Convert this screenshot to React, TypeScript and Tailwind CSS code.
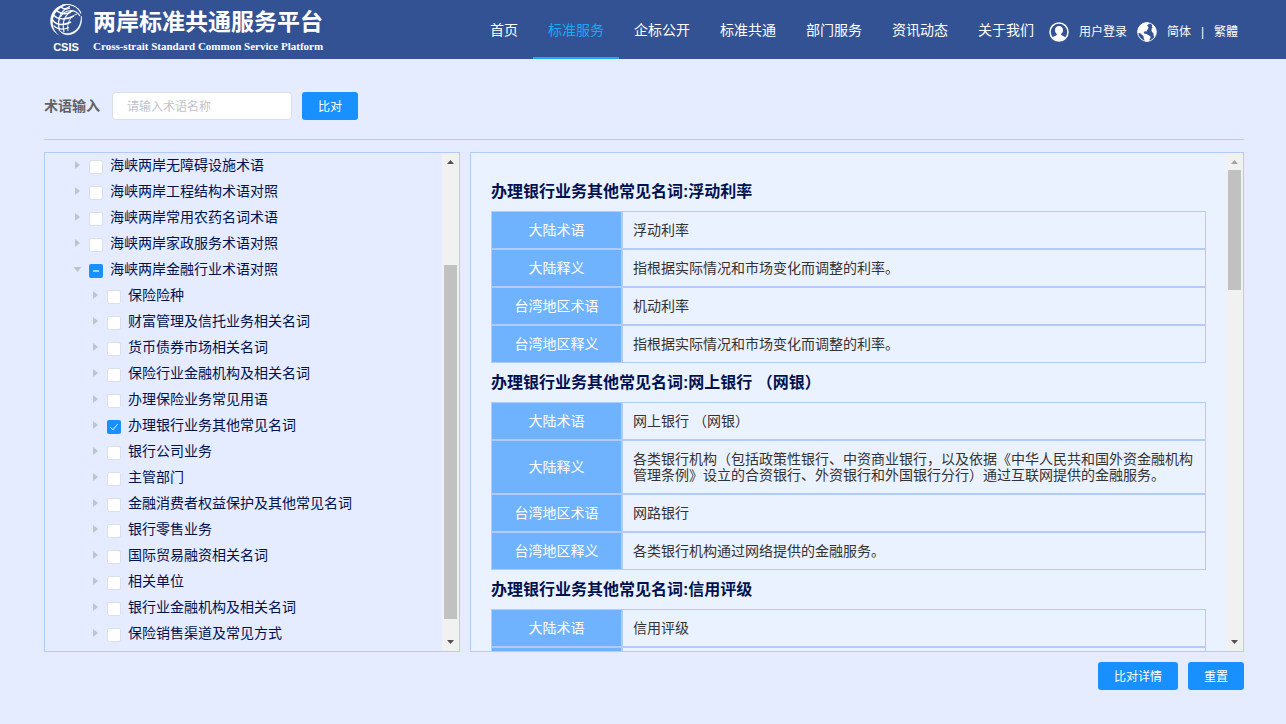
import { useState } from "react";

type TreeNode = {
  label: string;
  level: 1 | 2;
  state?: "checked" | "partial";
  open?: boolean;
};

const NAV = ["首页", "标准服务", "企标公开", "标准共通", "部门服务", "资讯动态", "关于我们"];

const TREE: TreeNode[] = [
  { label: "海峡两岸无障碍设施术语", level: 1 },
  { label: "海峡两岸工程结构术语对照", level: 1 },
  { label: "海峡两岸常用农药名词术语", level: 1 },
  { label: "海峡两岸家政服务术语对照", level: 1 },
  { label: "海峡两岸金融行业术语对照", level: 1, state: "partial", open: true },
  { label: "保险险种", level: 2 },
  { label: "财富管理及信托业务相关名词", level: 2 },
  { label: "货币债券市场相关名词", level: 2 },
  { label: "保险行业金融机构及相关名词", level: 2 },
  { label: "办理保险业务常见用语", level: 2 },
  { label: "办理银行业务其他常见名词", level: 2, state: "checked" },
  { label: "银行公司业务", level: 2 },
  { label: "主管部门", level: 2 },
  { label: "金融消费者权益保护及其他常见名词", level: 2 },
  { label: "银行零售业务", level: 2 },
  { label: "国际贸易融资相关名词", level: 2 },
  { label: "相关单位", level: 2 },
  { label: "银行业金融机构及相关名词", level: 2 },
  { label: "保险销售渠道及常见方式", level: 2 },
];

const TERMS: { title: string; rows: [string, string][] }[] = [
  {
    title: "办理银行业务其他常见名词:浮动利率",
    rows: [
      ["大陆术语", "浮动利率"],
      ["大陆释义", "指根据实际情况和市场变化而调整的利率。"],
      ["台湾地区术语", "机动利率"],
      ["台湾地区释义", "指根据实际情况和市场变化而调整的利率。"],
    ],
  },
  {
    title: "办理银行业务其他常见名词:网上银行 （网银）",
    rows: [
      ["大陆术语", "网上银行 （网银）"],
      [
        "大陆释义",
        "各类银行机构（包括政策性银行、中资商业银行，以及依据《中华人民共和国外资金融机构管理条例》设立的合资银行、外资银行和外国银行分行）通过互联网提供的金融服务。",
      ],
      ["台湾地区术语", "网路银行"],
      ["台湾地区释义", "各类银行机构通过网络提供的金融服务。"],
    ],
  },
  {
    title: "办理银行业务其他常见名词:信用评级",
    rows: [
      ["大陆术语", "信用评级"],
      ["", ""],
    ],
  },
];

function LogoMark() {
  return (
    <svg viewBox="0 0 34 34" className="h-[34px] w-[34px]" fill="none" stroke="#fff">
      <path d="M20 1.200C9 .5 1.500 8 1.300 17.500C1.200 24 4.500 29.500 10.500 32.500C5.500 28.500 3.300 24 3.800 18C4.400 10 10.500 3.500 20 1.200Z" fill="#fff" stroke="none" />
      <path d="M13 2C21 .2 29 3 32 10.500" strokeWidth="1.100" />
      <path d="M32.300 13C34 22 28.500 31.500 19 31.800C15 31.800 12 30 10.500 27.500C14 31 19 31.300 23.500 29.300C29.500 26.500 32.300 20.500 32.300 13Z" fill="#fff" strokeWidth="0.600" />
      <path d="M11.500 14C15 6.500 26 5 31 13" strokeWidth="1.100" />
      <path d="M21 3.500C12 7 7.500 16 10.500 27.500" strokeWidth="1.300" />
      <path d="M24 7.500C16 11 12.500 19 15 29" strokeWidth="1.100" />
      <path d="M28 11C21 13.500 17.500 20 19 28" strokeWidth="0.900" />
      <path d="M7.500 7.500C12 11.500 17 11.500 22 9" strokeWidth="1.500" />
      <path d="M4.500 12C9 17 17 17 25 13" strokeWidth="1.500" />
      <path d="M3.500 17C8 22.500 15 22.500 22 19" strokeWidth="1.400" />
      <path d="M4.500 22.500C9 27 14 27 20 24.500" strokeWidth="1.200" />
      <path d="M12 4C15 6.500 18 6.500 21 5" strokeWidth="1.300" />
    </svg>
  );
}

function UserIcon() {
  return (
    <svg viewBox="0 0 20 20" className="h-5 w-5">
      <circle cx="10" cy="10" r="9" fill="none" stroke="#fff" strokeWidth="1.500" />
      <path
        d="M10 4C7.500 4 6 5.800 6 8.200C6 9.800 6.800 11.200 7.900 12C7.900 13 7.500 13.400 6.400 13.800C5 14.300 4.200 14.800 3.800 15.800A8.500 8.500 0 0 0 16.200 15.800C15.800 14.800 15 14.300 13.600 13.800C12.500 13.400 12.100 13 12.100 12C13.200 11.200 14 9.800 14 8.200C14 5.800 12.500 4 10 4Z"
        fill="#fff"
      />
    </svg>
  );
}

function GlobeIcon() {
  return (
    <svg viewBox="0 0 20 20" className="h-5 w-5">
      <circle cx="10" cy="10" r="9.300" fill="none" stroke="#fff" strokeWidth="1" />
      <path
        d="M10.500 .6C6 .4 2.200 3 1 7.200C.5 9 .7 10.300 1.200 11.200C2.400 10.600 3.200 10.900 4.300 12.200C5.200 13.200 6.600 13.400 6.500 14.600C6.400 16 7.200 17.400 8 19.200C9 19.600 10.500 19.500 12 19.200C12.200 17.300 13.600 16.400 13.600 15C13.500 13.800 11.800 13.600 10.700 12.700C9.500 11.800 8.300 11.700 7.400 11.500C6.500 11.200 6.700 10 7.500 9.500C8.400 9 9 9.600 9.700 9.500C9.800 8 11.300 7 11.500 5.600C11.600 4.600 10.500 4.800 10.200 3.800C10.300 3 11.600 2.500 12.400 1Z"
        fill="#fff"
      />
      <path
        d="M15.500 2.600C14.500 3.600 14.800 4.700 15.600 5.500C14.500 6.300 14.600 7.200 14.500 8.200C14.500 9.600 15.500 10.600 16.500 11.300C16.200 12.900 16.600 14.100 17.300 15.300C20 12 20.300 6 15.500 2.600Z"
        fill="#fff"
      />
    </svg>
  );
}

function Header() {
  return (
    <header className="flex h-[59px] items-stretch bg-[#335293] pr-12 pl-12 text-white">
      <a href="#" className="flex items-start" aria-label="两岸标准共通服务平台">
        <span className="flex w-9 flex-col items-center pt-[3px]">
          <LogoMark />
          <span className="pt-1 text-[11px] leading-3 font-bold">CSIS</span>
        </span>
        <span className="flex flex-col pt-2 pl-[9px] font-['Liberation_Serif','Noto_Sans_CJK_SC',serif] font-bold whitespace-nowrap">
          <span className="text-[23px] leading-[30px]">两岸标准共通服务平台</span>
          <span className="text-[11px] leading-4">Cross-strait Standard Common Service Platform</span>
        </span>
      </a>
      <nav className="ml-auto flex text-sm whitespace-nowrap">
        {NAV.map((item) => (
          <a
            key={item}
            href="#"
            className={
              item === "标准服务"
                ? "flex items-center border-b-2 border-[#19a9f5] px-[15px] pt-[2px] text-[#19a9f5]"
                : "flex items-center border-b-2 border-transparent px-[15px] pt-[2px]"
            }
          >
            {item}
          </a>
        ))}
      </nav>
      <div className="flex items-center pt-1 text-xs whitespace-nowrap">
        <a href="#" className="flex items-center gap-[10px]">
          <UserIcon />
          <span>用户登录</span>
        </a>
        <a href="#" className="ml-[10px] flex items-center gap-[10px]">
          <GlobeIcon />
          <span>简体</span>
        </a>
        <span className="w-[23px] text-center">|</span>
        <a href="#">繁體</a>
      </div>
    </header>
  );
}

function ScrollBar({ start, size, atTop }: { start: number; size: number; atTop?: boolean }) {
  return (
    <div className="flex w-[17px] shrink-0 flex-col bg-[#f1f1f1]" aria-hidden="true">
      <svg viewBox="0 0 17 17" className="h-[17px] w-[17px]">
        <path d="M5 11L8.500 7L12 11Z" fill={atTop ? "#a3a3a3" : "#505050"} />
      </svg>
      <div className="flex grow flex-col items-center">
        <div style={{ height: `${start}%` }} />
        <div className="w-[13px] bg-[#c1c1c1]" style={{ height: `${size}%` }} />
      </div>
      <svg viewBox="0 0 17 17" className="h-[17px] w-[17px]">
        <path d="M5 6L8.500 10L12 6Z" fill="#505050" />
      </svg>
    </div>
  );
}

function TreeRow({ node, id }: { node: TreeNode; id: string }) {
  const [state, setState] = useState(node.state);
  return (
    <li className={node.level === 1 ? "flex h-[26px] items-center pl-5" : "flex h-[26px] items-center pl-[38px]"}>
      <button type="button" aria-label="展开" className="flex h-6 w-6 shrink-0 justify-center pt-1">
        <svg viewBox="0 0 12 12" className="h-3 w-3" fill="#c0c4cc">
          {node.open ? <path d="M2.500 5L10.500 5L6.500 10Z" /> : <path d="M4 3L9 7L4 11Z" />}
        </svg>
      </button>
      <span className="relative mt-[2px] h-[14px] w-[14px] shrink-0">
        <input
          id={id}
          type="checkbox"
          checked={state === "checked"}
          onChange={() => setState(state === "checked" ? undefined : "checked")}
          className={
            state
              ? "block h-[14px] w-[14px] appearance-none rounded-[2px] bg-[#1890ff]"
              : "block h-[14px] w-[14px] appearance-none rounded-[2px] border border-[#dcdfe6] bg-white"
          }
        />
        {state && (
          <svg viewBox="0 0 14 14" className="pointer-events-none absolute inset-0" fill="none" stroke="#fff">
            {state === "checked" ? <path d="M3.500 7.200L6 9.800L10.500 4.200" /> : <path d="M4 7H10" stroke="#a3d3ff" strokeWidth="2" />}
          </svg>
        )}
      </span>
      <label htmlFor={id} className="pb-[2px] pl-[7px] leading-5 whitespace-nowrap">
        {node.label}
      </label>
    </li>
  );
}

export default function App() {
  return (
    <div className="min-h-screen bg-[#e5ecff] font-['Liberation_Sans','Noto_Sans_CJK_SC',sans-serif] text-sm text-[#333]">
      <Header />
      <main className="pt-[33px] pr-[42px] pl-11">
        <form className="flex items-center border-b border-[#b3cbfa] pb-[19px]" onSubmit={(e) => e.preventDefault()}>
          <label htmlFor="term" className="w-[68px] font-bold text-[#606266]">
            术语输入
          </label>
          <input
            id="term"
            placeholder="请输入术语名称"
            className="h-7 w-[180px] rounded-[4px] border border-[#dcdfe6] bg-white px-[14px] pt-[2px] text-xs placeholder:text-[#c0c4cc]"
          />
          <button type="submit" className="ml-[10px] h-7 rounded-[3px] bg-[#1890ff] px-4 pt-[2px] text-xs text-white">
            比对
          </button>
        </form>

        <div className="mt-3 flex h-[500px] gap-[10px]">
          <section className="flex w-[416px] shrink-0 border border-[#b3cbfa]">
            <ul className="min-w-0 grow overflow-y-auto text-[#00114f] [scrollbar-width:none]">
              {TREE.map((node, i) => (
                <TreeRow key={node.label} node={node} id={`node-${i}`} />
              ))}
            </ul>
            <ScrollBar start={20.5} size={76.3} />
          </section>

          <section className="flex min-w-0 grow border border-[#b3cbfa] bg-[#ebf2ff]">
            <div className="min-w-0 grow overflow-y-auto pt-[19px] pr-5 pl-5 [scrollbar-width:none]">
              {TERMS.map((term) => (
                <article key={term.title}>
                  <h2 className="h-[39px] text-base leading-10 font-bold text-[#00114f]">{term.title}</h2>
                  <table className="w-full border-separate border-spacing-0 leading-4">
                    <tbody>
                      {term.rows.map(([name, value]) => (
                        <tr key={name} className="h-[38px]">
                          <th className="w-[131px] border border-[#b3cbfa] bg-[#6fb3ff] py-[10px] font-normal text-white">
                            {name}
                          </th>
                          <td className="border border-[#b3cbfa] px-[10px] py-[10px]">{value}</td>
                        </tr>
                      ))}
                    </tbody>
                  </table>
                </article>
              ))}
            </div>
            <ScrollBar start={0} size={25.9} atTop />
          </section>
        </div>

        <div className="flex justify-end gap-[10px] pt-[10px] pb-[34px] text-xs text-white">
          <button type="button" className="h-7 rounded-[3px] bg-[#1890ff] px-4 pt-[2px]">
            比对详情
          </button>
          <button type="button" className="h-7 rounded-[3px] bg-[#1890ff] px-4 pt-[2px]">
            重置
          </button>
        </div>
      </main>
    </div>
  );
}
